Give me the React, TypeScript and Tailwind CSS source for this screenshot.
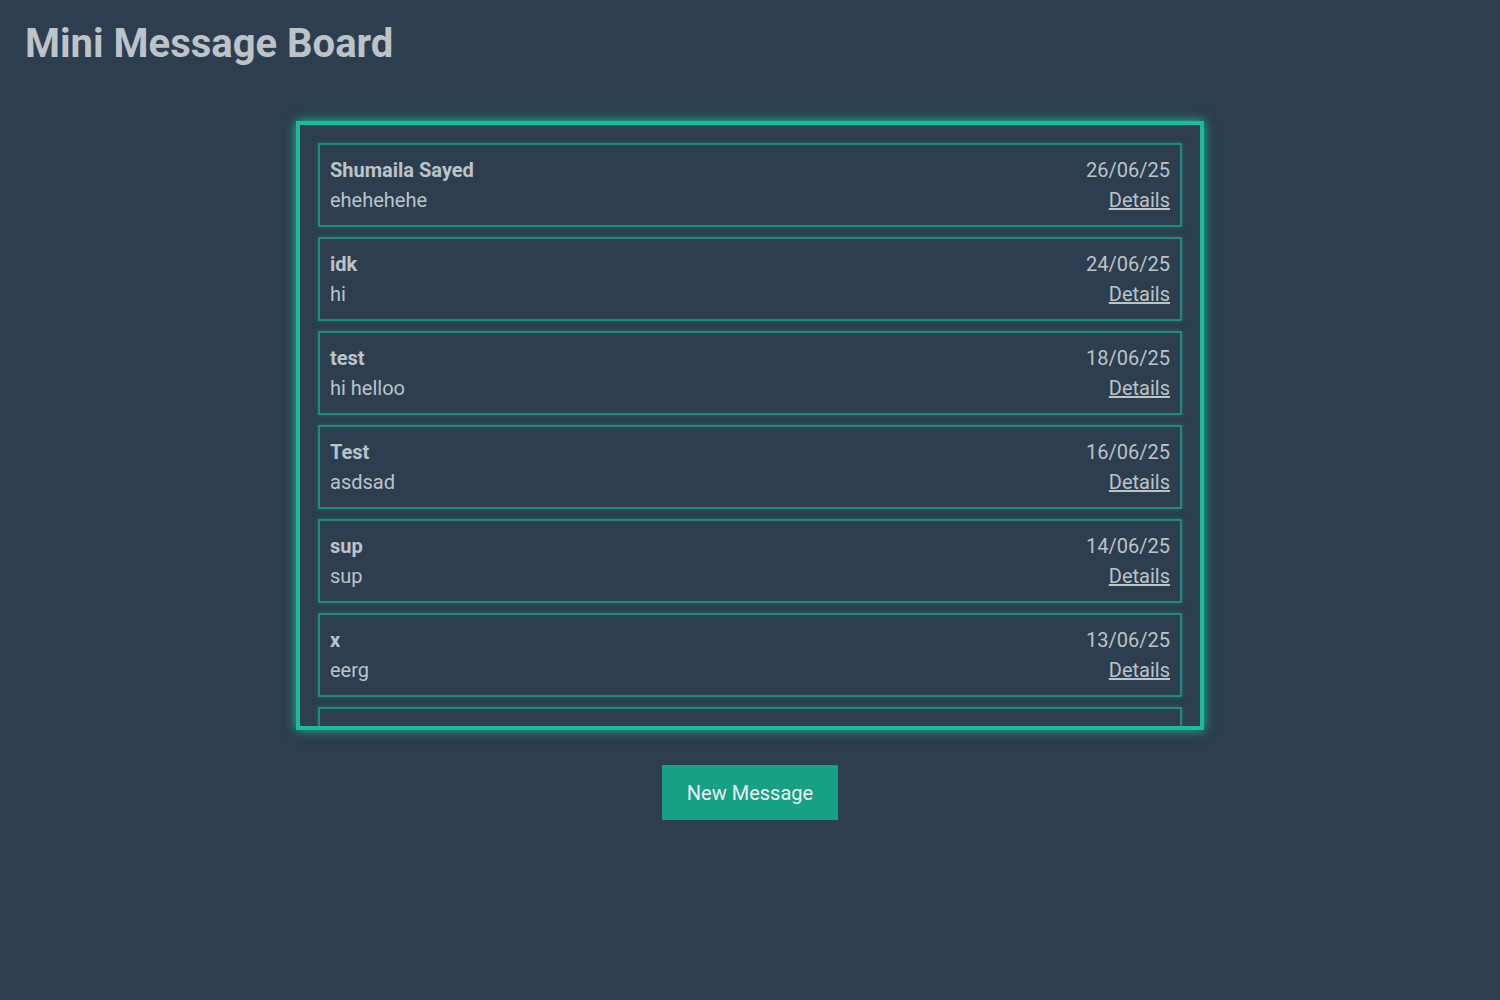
type Message = { user: string; text: string; date: string }

const messages: Message[] = [
  { user: 'Shumaila Sayed', text: 'ehehehehe', date: '26/06/25' },
  { user: 'idk', text: 'hi', date: '24/06/25' },
  { user: 'test', text: 'hi helloo', date: '18/06/25' },
  { user: 'Test', text: 'asdsad', date: '16/06/25' },
  { user: 'sup', text: 'sup', date: '14/06/25' },
  { user: 'x', text: 'eerg', date: '13/06/25' },
  { user: 'Amando', text: 'Hi there!', date: '12/06/25' },
  { user: 'Charles', text: 'Hello World!', date: '12/06/25' },
]

function MessageCard({ m }: { m: Message }) {
  return (
    <div className="mb-[10px] flex justify-between border-2 border-[#1f8a80] px-[10px] py-[10px] shadow-[0_0_4px_rgba(26,188,156,0.35)]">
      <div className="flex flex-col">
        <span className="font-bold">{m.user}</span>
        <span>{m.text}</span>
      </div>
      <div className="flex flex-col items-end">
        <span>{m.date}</span>
        <a href="#" className="underline">
          Details
        </a>
      </div>
    </div>
  )
}

export default function App() {
  return (
    <div className="min-h-screen bg-[#2c3e50] font-['Roboto',sans-serif] text-[#bdc3c7]">
      <h1 className="pl-[25px] pt-[20px] text-[40px] font-bold leading-[48px]">Mini Message Board</h1>

      <main className="mt-[53px] flex flex-col items-center">
        <div className="h-[609px] w-[908px] overflow-hidden border-4 border-[#1abc9c] p-[18px] text-[20px] leading-[30px] shadow-[0_0_10px_#1abc9c]">
          {messages.map((m, i) => (
            <MessageCard key={i} m={m} />
          ))}
        </div>

        <button className="mt-[35px] flex h-[55px] w-[176px] items-center justify-center bg-[#16a085] text-[20px] text-[#ecf0f1]">
          New Message
        </button>
      </main>
    </div>
  )
}
